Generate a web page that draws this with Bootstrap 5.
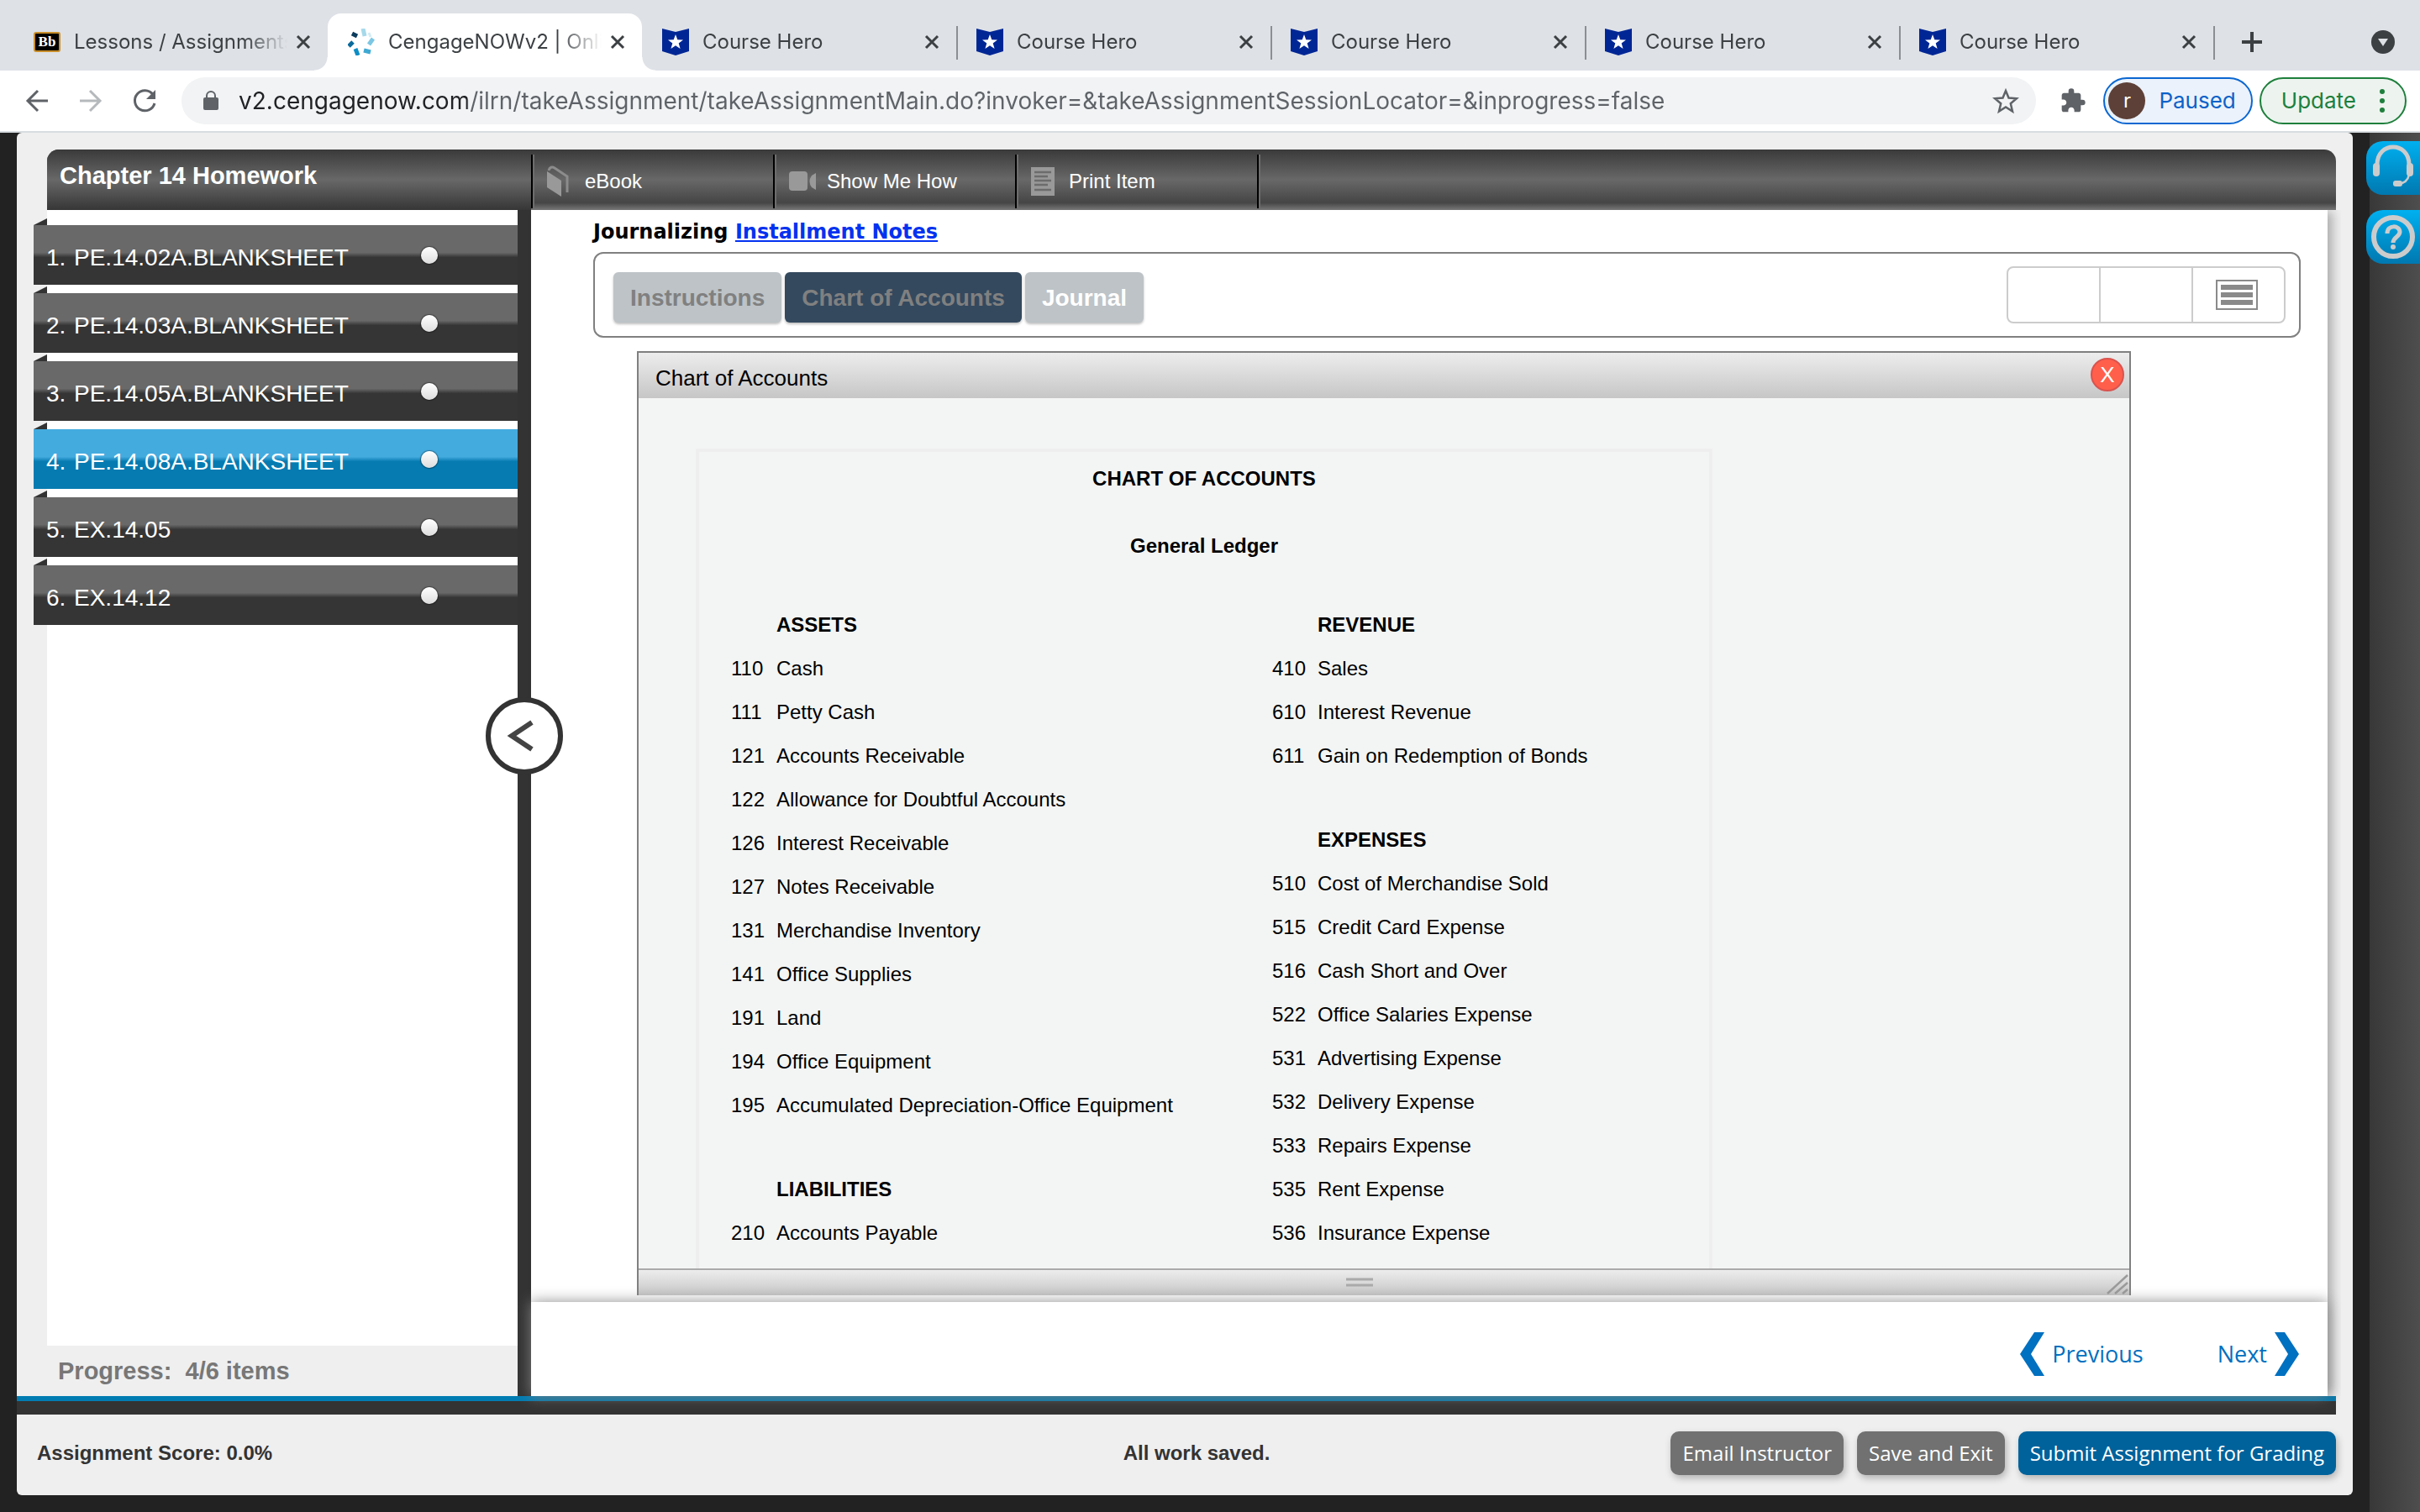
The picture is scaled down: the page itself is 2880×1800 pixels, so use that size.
<!DOCTYPE html>
<html lang="en">
<head>
<meta charset="utf-8">
<meta name="viewport" content="width=device-width, initial-scale=1">
<title>CengageNOWv2 | Online teaching and learning</title>
<link href="https://cdn.jsdelivr.net/npm/bootstrap@5.3.0/dist/css/bootstrap.min.css" rel="stylesheet">
<style>
body{font-family:"Liberation Sans",Arial,sans-serif;font-size:24px;line-height:32px;color:#000;background:#222}
svg{display:block;flex:none}
button{font-family:inherit}
/* browser chrome */
.tabstrip{height:84px;background:#dee1e6;padding:16px 30px 0 16px;font-family:Inter,sans-serif;color:#3c4043}
.tabitem{flex:0 1 374px;min-width:0;height:68px;padding:0 20px 0 24px;position:relative}
.tabname{flex:1 1 0;min-width:0;margin-right:-6px;white-space:nowrap;overflow:hidden;-webkit-mask-image:linear-gradient(90deg,#000 80%,transparent);mask-image:linear-gradient(90deg,#000 80%,transparent)}
.tabitem.divided::after{content:"";position:absolute;right:-2px;top:15px;width:2px;height:40px;background:#8b8e93}
.tabitem.current{background:#fff;border-radius:16px 16px 0 0}
.tabitem.current::before,.tabitem.current::after{content:"";position:absolute;bottom:0;width:16px;height:16px}
.tabitem.current::before{left:-16px;background:radial-gradient(circle at 0 0,transparent 15px,#fff 16px)}
.tabitem.current::after{right:-16px;background:radial-gradient(circle at 100% 0,transparent 15px,#fff 16px)}
.tabtail{padding-left:34px}
.plain{border:0;background:none;padding:0;color:inherit}
.bbmark{width:32px;height:24px;border:2px solid #c98f2b;border-radius:3px;background:#000;color:#fff;font:bold 17px/20px "Liberation Serif",serif;text-align:center}
.toolbar{height:74px;background:#fff;border-bottom:2px solid #d8dde1;padding:0 16px 0 28px;color:#5f6368;font-family:Inter,sans-serif}
.arrows{gap:32px;margin-right:28px}
.omnibox{height:56px;border-radius:28px;background:#f1f3f4;padding:0 20px 0 26px}
.omnibox input{border:0;outline:0;font:28px/40px Inter,sans-serif;color:transparent;background:linear-gradient(90deg,#202124 280px,#5f6368 280px);-webkit-background-clip:text;background-clip:text}
.pill{height:56px;border-radius:28px;border:2px solid #0b67d1;background:#ebf2fb;color:#0b62c9;font-size:26px;padding:0 18px 0 4px;gap:16px}
.pill.upd{border-color:#1e7f3c;background:#edf4ef;color:#1e7f3c;padding:0 24px;gap:28px}
.face{width:44px;height:44px;border-radius:50%;background:#5d4037;color:#fff;font-size:24px}
/* page */
.edge{width:60px;background:linear-gradient(90deg,#383838,#4e4e4e);padding-top:10px;gap:18px}
.side-help{width:64px;height:64px;border:0;border-radius:20px 0 0 20px;background:linear-gradient(#00b0f0,#0078b0);margin-left:-4px;padding:0}
.app{background:#efefef;border-radius:6px;margin:0 20px 20px}
.fit{min-width:0;min-height:0}
.topbar{height:72px;margin:20px 20px 0 36px;border-radius:14px 14px 0 0;color:#fff;background:linear-gradient(#3a3a3a,#686868 50%,#454545 88%,#777);overflow:hidden}
.course{width:576px;padding:0 15px;background:linear-gradient(#3a3a3a,#686868 50%,#363636);font-size:29px;font-weight:bold;line-height:62px;margin:0}
.topbar .tool{width:288px;height:64px;margin-top:6px;padding:0 0 0 17px;border-left:2px solid #000;box-shadow:inset 2px 0 0 #6d6d6d}
.topbar .tool-end{width:4px;height:64px;margin-top:6px;background:#000;border-right:2px solid #6d6d6d}
.topbar svg{width:32px;margin-right:13px}
.leftnav{width:596px;padding-left:36px}
.navsheet{background:#fff;padding-top:18px}
.navitem{height:71px;margin:0 0 10px -16px;padding:0 95px 0 15px;color:#fff;font-size:28px;text-decoration:none;position:relative;background:linear-gradient(#696969 46%,#353535 54%)}
.navitem::before{content:"";position:absolute;left:0;top:-8px;border-left:16px solid transparent;border-bottom:8px solid #333}
.navitem .txt{padding-top:6px;flex:1}
.navitem .num{width:33px;display:inline-block}
.navitem.on{background:linear-gradient(#44abdf 46%,#067bb1 54%)}
.dot{width:20px;height:20px;border-radius:50%;background:linear-gradient(#fff,#ddd);box-shadow:0 0 1px 1px rgba(0,0,0,.35)}
.progress-line{height:60px;margin:0;padding-left:13px;font-size:29px;line-height:60px;font-weight:bold;color:#777}
.divider{width:16px;background:#333;position:relative}
.collapse-btn{position:absolute;left:-38px;top:580px;width:92px;height:92px;border-radius:50%;border:6px solid #333;background:#fff;z-index:5;padding:0}
.stage{background:#fff;margin-right:30px;box-shadow:8px 0 12px -2px rgba(0,0,0,.28);position:relative;clip-path:inset(0 -16px -22px -16px)}
.content{padding:10px 32px 0 74px;overflow:hidden}
.content h1{font:bold 24px/32px "DejaVu Sans",Verdana,sans-serif;margin:0 0 8px}
.content h1 a{color:#0432f0}
.toolbox{height:102px;border:2px solid #808080;border-radius:12px;padding:0 16px 0 22px}
.seg{height:60px;border:0;border-radius:6px;background:#bdc3c7;color:#808080;font-size:28px;font-weight:bold;padding:2px 20px 0;box-shadow:0 2px 3px rgba(0,0,0,.25);white-space:nowrap}
.seg.on{background:#34495e}
.seg.live{color:#fff}
.segs{padding-top:6px}
.trio{width:332px;height:68px;border:2px solid #ccc;border-radius:8px}
.trio button{flex:1 1 0;border:0;background:none;padding:0 4px 0 0}
.trio button + button{border-left:2px solid #ccc}
.win{margin:16px 202px 0 52px;border:2px solid #808080;border-bottom:0;background:#f3f5f4}
.win-head{height:54px;background:linear-gradient(#ededed,#c6c6c6);padding:6px 6px 0 20px;font-size:26px;line-height:48px}
.xbtn{width:40px;height:40px;border-radius:50%;border:2px solid #d9534f;background:#ff5f4b;color:#fff;font-size:26px;line-height:36px;padding:0}
.win-body{overflow:hidden;padding:60px 0 0 68px}
.sheet{width:1210px;border:4px solid #eee;padding:16px 0 0 38px;font-size:24px;height:1100px}
.sheet h2,.sheet h3{font-size:24px;line-height:32px;font-weight:bold;margin:0 38px 48px 0;text-align:center}
.sheet h3{margin-bottom:52px}
.cols{display:grid;grid-template-columns:644px 1fr;align-items:start}
.cols td,.cols th{height:52px;padding:0;white-space:nowrap}
.cols td:first-child{width:54px}
.cols tbody + tbody::before{content:"";display:block;height:48px}
.win-foot{height:32px;border-top:2px solid #aaa;background:linear-gradient(#ededed,#c6c6c6);padding-right:58px}
.win-foot .grip{position:absolute;right:0;bottom:0}
.pager{height:112px;margin-top:8px;background:#fff;padding:12px 34px 0 0;box-shadow:0 0 16px rgba(136,136,136,.95);position:relative;z-index:2;gap:88px}
.pager a{color:#0070c0;text-decoration:none;font:27px/40px "Open Sans",sans-serif}
.rule-blue{height:6px;background:#007cb2;margin-right:20px}
.rule-dark{height:16px;background:#333;margin-right:20px}
.foot{height:96px;padding:0 20px 4px 24px;color:#333;display:grid;grid-template-columns:1fr auto 1fr;align-items:center;font-weight:bold}
.act{height:52px;border:0;border-radius:10px;background:#717171;color:#fff;font:24px/32px "Open Sans",sans-serif;padding:0 14px;box-shadow:2px 4px 8px rgba(0,0,0,.25);white-space:nowrap}
.act.go{background:#00629b}
</style>
</head>
<body>
<svg width="0" height="0" class="position-absolute" aria-hidden="true">
  <symbol id="x" viewBox="0 0 18 18"><path d="M2 2l14 14M16 2L2 16" stroke="#3c4043" stroke-width="3" fill="none"/></symbol>
  <symbol id="hero" viewBox="0 0 32 32"><path d="M0 0l16 4L32 0v27l-16 5L0 27z" fill="#002695"/><path d="M16 7l2.300 6.300 6.700.200-5.300 4.100 1.900 6.400L16 20.200 10.400 24l1.900-6.400L7 13.500l6.700-.200z" fill="#fff"/></symbol>
</svg>
<div class="vh-100 d-flex flex-column overflow-hidden">
  <header class="flex-shrink-0">
    <nav class="tabstrip d-flex" aria-label="Tabs">
      <div class="tabitem d-flex align-items-center gap-3"><span class="bbmark">Bb</span><span class="tabname">Lessons / Assignments</span><button class="plain" aria-label="Close tab"><svg width="18" height="18"><use href="#x"/></svg></button></div>
      <div class="tabitem current d-flex align-items-center gap-3">
        <svg width="32" height="32" viewBox="0 0 32 32" fill="none" stroke-width="5"><path d="M18 0l2 9" stroke="#a6d9ea"/><path d="M30 12l-5 7" stroke="#7cc7e3"/><path d="M27 28l-8-2" stroke="#3fa9d3"/><path d="M12 32l-3-8" stroke="#0c8dc5"/><path d="M1 21l5-5" stroke="#0a6a9c"/><path d="M5 6l6 3" stroke="#0b3b5d"/><path d="M25 5l2 5" stroke="#d2ecf5" stroke-width="3"/></svg>
        <span class="tabname">CengageNOWv2 | Online</span><button class="plain" aria-label="Close tab"><svg width="18" height="18"><use href="#x"/></svg></button></div>
      <div class="tabitem divided d-flex align-items-center gap-3"><svg width="32" height="32"><use href="#hero"/></svg><span class="tabname">Course Hero</span><button class="plain" aria-label="Close tab"><svg width="18" height="18"><use href="#x"/></svg></button></div>
      <div class="tabitem divided d-flex align-items-center gap-3"><svg width="32" height="32"><use href="#hero"/></svg><span class="tabname">Course Hero</span><button class="plain" aria-label="Close tab"><svg width="18" height="18"><use href="#x"/></svg></button></div>
      <div class="tabitem divided d-flex align-items-center gap-3"><svg width="32" height="32"><use href="#hero"/></svg><span class="tabname">Course Hero</span><button class="plain" aria-label="Close tab"><svg width="18" height="18"><use href="#x"/></svg></button></div>
      <div class="tabitem divided d-flex align-items-center gap-3"><svg width="32" height="32"><use href="#hero"/></svg><span class="tabname">Course Hero</span><button class="plain" aria-label="Close tab"><svg width="18" height="18"><use href="#x"/></svg></button></div>
      <div class="tabitem divided d-flex align-items-center gap-3"><svg width="32" height="32"><use href="#hero"/></svg><span class="tabname">Course Hero</span><button class="plain" aria-label="Close tab"><svg width="18" height="18"><use href="#x"/></svg></button></div>
      <div class="tabtail d-flex flex-grow-1 align-items-center justify-content-between">
        <button class="plain" aria-label="New tab"><svg width="24" height="24" viewBox="0 0 24 24"><path d="M12 0v24M0 12h24" stroke="#3c4043" stroke-width="4"/></svg></button>
        <button class="plain" aria-label="Search tabs"><svg width="28" height="28" viewBox="0 0 28 28"><circle cx="14" cy="14" r="14" fill="#3c4043"/><path d="M8 10h12l-6 9z" fill="#dee1e6"/></svg></button>
      </div>
    </nav>
    <div class="toolbar d-flex align-items-center">
      <div class="arrows d-flex align-items-center">
        <button class="plain" aria-label="Back"><svg width="32" height="32" viewBox="0 0 32 32" fill="none" stroke="#5f6368" stroke-width="3"><path d="M29 16H5M17 4L5 16l12 12"/></svg></button>
        <button class="plain" aria-label="Forward"><svg width="32" height="32" viewBox="0 0 32 32" fill="none" stroke="#b6b9bc" stroke-width="3"><path d="M3 16h24M15 4l12 12-12 12"/></svg></button>
        <button class="plain" aria-label="Reload"><svg width="32" height="32" viewBox="0 0 32 32" fill="none" stroke="#5f6368" stroke-width="3"><path d="M26 8.500A12 12 0 1 0 28 19"/><path d="M29 3v11H18z" fill="#5f6368" stroke="none"/></svg></button>
      </div>
      <div class="omnibox d-flex align-items-center flex-grow-1">
        <svg width="18" height="24" viewBox="0 0 18 24"><path d="M4 10V6a5 5 0 0 1 10 0v4" fill="none" stroke="#5f6368" stroke-width="2"/><rect y="8" width="18" height="15" rx="2" fill="#5f6368"/></svg>
        <input class="flex-grow-1 ms-3 p-0 ps-2" type="text" aria-label="Address" value="v2.cengagenow.com/ilrn/takeAssignment/takeAssignmentMain.do?invoker=&amp;takeAssignmentSessionLocator=&amp;inprogress=false">
        <button class="plain" aria-label="Bookmark"><svg width="32" height="32" viewBox="0 0 32 32"><path d="M16 4l3.500 8.500 9.500.700-7.200 6 2.200 9.300-8-5-8 5 2.200-9.300-7.200-6 9.500-.700z" fill="none" stroke="#5f6368" stroke-width="2.500"/></svg></button>
      </div>
      <button class="plain ms-4 ps-1 me-3 pe-1" aria-label="Extensions"><svg width="32" height="32" viewBox="0 0 24 24"><path d="M20.500 11H19V7c0-1.100-.900-2-2-2h-4V3.500a2.500 2.500 0 0 0-5 0V5H4c-1.100 0-2 .900-2 2v3.800h1.500c1.500 0 2.700 1.200 2.700 2.700S5 16.200 3.500 16.200H2V20c0 1.100.900 2 2 2h3.800v-1.500c0-1.500 1.200-2.700 2.700-2.700s2.700 1.200 2.700 2.700V22H17c1.100 0 2-.900 2-2v-4h1.500a2.500 2.500 0 0 0 0-5z" fill="#5f6368"/></svg></button>
      <button class="pill d-flex align-items-center"><span class="face d-flex align-items-center justify-content-center">r</span><span>Paused</span></button>
      <button class="pill upd d-flex align-items-center ms-2"><span>Update</span><svg width="6" height="30" viewBox="0 0 6 30" fill="#1e7f3c"><circle cx="3" cy="4" r="3"/><circle cx="3" cy="15" r="3"/><circle cx="3" cy="26" r="3"/></svg></button>
    </div>
  </header>

  <div class="d-flex flex-grow-1 fit">
    <div class="d-flex flex-column flex-grow-1 fit">
      <div class="app d-flex flex-column flex-grow-1 fit">
        <div class="topbar d-flex flex-shrink-0">
          <h2 class="course">Chapter 14 Homework</h2>
          <button class="plain tool d-flex align-items-center"><svg height="40" viewBox="0 0 32 40"><path d="M0 8l17 11v19L0 27z" fill="#999"/><path d="M2 7c1-4 4-5 7-3l15 10v19" fill="none" stroke="#8c8c8c" stroke-width="3"/></svg>eBook</button>
          <button class="plain tool d-flex align-items-center"><svg height="24" viewBox="0 0 32 24" fill="#999"><rect width="22" height="23" rx="4"/><path d="M32 2v20l-5-3q-5-7 0-14z"/></svg>Show Me How</button>
          <button class="plain tool d-flex align-items-center"><svg height="34" viewBox="0 0 32 34"><path d="M0 0h28v34H0z" fill="#999"/><path d="M4 6h20M4 11h16M4 16h20M4 21h16M4 27h20" stroke="#6c6c6c" stroke-width="2.500"/></svg>Print Item</button>
          <div class="tool-end"></div>
        </div>
        <div class="d-flex flex-grow-1 fit">
          <aside class="leftnav d-flex flex-column flex-shrink-0">
            <nav class="navsheet flex-grow-1">
              <a href="#" class="navitem d-flex align-items-center"><span class="txt"><span class="num">1.</span>PE.14.02A.BLANKSHEET</span><span class="dot"></span></a>
              <a href="#" class="navitem d-flex align-items-center"><span class="txt"><span class="num">2.</span>PE.14.03A.BLANKSHEET</span><span class="dot"></span></a>
              <a href="#" class="navitem d-flex align-items-center"><span class="txt"><span class="num">3.</span>PE.14.05A.BLANKSHEET</span><span class="dot"></span></a>
              <a href="#" class="navitem on d-flex align-items-center"><span class="txt"><span class="num">4.</span>PE.14.08A.BLANKSHEET</span><span class="dot"></span></a>
              <a href="#" class="navitem d-flex align-items-center"><span class="txt"><span class="num">5.</span>EX.14.05</span><span class="dot"></span></a>
              <a href="#" class="navitem d-flex align-items-center"><span class="txt"><span class="num">6.</span>EX.14.12</span><span class="dot"></span></a>
            </nav>
            <p class="progress-line">Progress:&nbsp; 4/6 items</p>
          </aside>
          <div class="divider flex-shrink-0"><button class="collapse-btn" aria-label="Collapse list"><svg width="80" height="80" viewBox="0 0 80 80"><path d="M49 24L25 40l24 16" fill="none" stroke="#444" stroke-width="6"/></svg></button></div>
          <main class="stage d-flex flex-column flex-grow-1 fit">
            <div class="content d-flex flex-column flex-grow-1 fit">
              <h1 class="flex-shrink-0">Journalizing <a href="#">Installment Notes</a></h1>
              <div class="toolbox d-flex align-items-center justify-content-between flex-shrink-0">
                <div class="segs d-flex gap-1">
                  <button class="seg">Instructions</button><button class="seg on">Chart of Accounts</button><button class="seg live">Journal</button>
                </div>
                <div class="trio d-flex">
                  <button aria-label="Tool one"></button><button aria-label="Tool two"></button>
                  <button class="d-flex align-items-center justify-content-center" aria-label="List view"><svg width="50" height="36" viewBox="0 0 50 36"><path d="M1 1h48v34H1z" fill="#fff" stroke="#8a8a8a" stroke-width="2"/><path d="M6 9h38M6 18h38M6 27h38" stroke="#8a8a8a" stroke-width="6"/></svg></button>
                </div>
              </div>
              <section class="win d-flex flex-column flex-grow-1 fit">
                <div class="win-head d-flex justify-content-between align-items-start flex-shrink-0"><span>Chart of Accounts</span><button class="xbtn" aria-label="Close">X</button></div>
                <div class="win-body flex-grow-1 fit">
                  <div class="sheet">
                    <h2>CHART OF ACCOUNTS</h2>
                    <h3>General Ledger</h3>
                    <div class="cols">
                      <table>
                        <tbody>
                          <tr><td></td><th>ASSETS</th></tr>
                          <tr><td>110</td><td>Cash</td></tr>
                          <tr><td>111</td><td>Petty Cash</td></tr>
                          <tr><td>121</td><td>Accounts Receivable</td></tr>
                          <tr><td>122</td><td>Allowance for Doubtful Accounts</td></tr>
                          <tr><td>126</td><td>Interest Receivable</td></tr>
                          <tr><td>127</td><td>Notes Receivable</td></tr>
                          <tr><td>131</td><td>Merchandise Inventory</td></tr>
                          <tr><td>141</td><td>Office Supplies</td></tr>
                          <tr><td>191</td><td>Land</td></tr>
                          <tr><td>194</td><td>Office Equipment</td></tr>
                          <tr><td>195</td><td>Accumulated Depreciation-Office Equipment</td></tr>
                        </tbody>
                        <tbody>
                          <tr><td></td><th>LIABILITIES</th></tr>
                          <tr><td>210</td><td>Accounts Payable</td></tr>
                        </tbody>
                      </table>
                      <table>
                        <tbody>
                          <tr><td></td><th>REVENUE</th></tr>
                          <tr><td>410</td><td>Sales</td></tr>
                          <tr><td>610</td><td>Interest Revenue</td></tr>
                          <tr><td>611</td><td>Gain on Redemption of Bonds</td></tr>
                        </tbody>
                        <tbody>
                          <tr><td></td><th>EXPENSES</th></tr>
                          <tr><td>510</td><td>Cost of Merchandise Sold</td></tr>
                          <tr><td>515</td><td>Credit Card Expense</td></tr>
                          <tr><td>516</td><td>Cash Short and Over</td></tr>
                          <tr><td>522</td><td>Office Salaries Expense</td></tr>
                          <tr><td>531</td><td>Advertising Expense</td></tr>
                          <tr><td>532</td><td>Delivery Expense</td></tr>
                          <tr><td>533</td><td>Repairs Expense</td></tr>
                          <tr><td>535</td><td>Rent Expense</td></tr>
                          <tr><td>536</td><td>Insurance Expense</td></tr>
                        </tbody>
                      </table>
                    </div>
                  </div>
                </div>
                <div class="win-foot position-relative d-flex align-items-center justify-content-center flex-shrink-0">
                  <svg width="32" height="12" viewBox="0 0 32 12"><path d="M0 2h32M0 9h32" stroke="#aaa" stroke-width="3"/></svg>
                  <svg class="grip" width="28" height="28" viewBox="0 0 28 28"><path d="M2 26L26 4M11 26l15-13M20 26l6-5" stroke="#9a9a9a" stroke-width="2.500"/></svg>
                </div>
              </section>
            </div>
            <nav class="pager d-flex align-items-center justify-content-end flex-shrink-0">
              <a href="#" class="d-flex align-items-center gap-2"><svg width="30" height="52" viewBox="0 0 30 52"><path d="M17 0h12L13 26l16 26H17L0 26z" fill="#0070c0"/></svg>Previous</a>
              <a href="#" class="d-flex align-items-center gap-2">Next<svg width="30" height="52" viewBox="0 0 30 52"><path d="M13 0H1l16 26L1 52h12l17-26z" fill="#0070c0"/></svg></a>
            </nav>
          </main>
        </div>
        <div class="rule-blue flex-shrink-0"></div>
        <div class="rule-dark flex-shrink-0"></div>
        <footer class="foot flex-shrink-0">
          <span>Assignment Score: 0.0%</span>
          <span class="ps-4">All work saved.</span>
          <div class="d-flex justify-content-end gap-3">
            <button class="act">Email Instructor</button><button class="act">Save and Exit</button><button class="act go">Submit Assignment for Grading</button>
          </div>
        </footer>
      </div>
    </div>
    <aside class="edge d-flex flex-column flex-shrink-0">
      <button class="side-help" aria-label="Support"><svg width="64" height="64" viewBox="0 0 64 64" fill="none" stroke="#ccc"><path d="M13 32V28C13 0 51 0 51 28v4" stroke-width="5"/><path d="M51 40q-2 10-13 11" stroke-width="2.500"/><rect x="8" y="26" width="8" height="16" rx="4" fill="#ccc" stroke="none"/><rect x="48" y="26" width="8" height="16" rx="4" fill="#ccc" stroke="none"/><rect x="32" y="47" width="11" height="7" rx="3" fill="#ccc" stroke="none"/></svg></button>
      <button class="side-help" aria-label="Help"><svg width="64" height="64" viewBox="0 0 64 64" fill="none" stroke="#ccc"><circle cx="32" cy="32" r="23" stroke-width="6"/><path d="M25 28c0-11 15-10 15-2 0 6-8 6-8 13" stroke-width="5"/><circle cx="32" cy="44" r="3" fill="#ccc" stroke="none"/></svg></button>
    </aside>
  </div>
</div>
<script src="https://cdn.jsdelivr.net/npm/bootstrap@5.3.0/dist/js/bootstrap.bundle.min.js"></script>
</body>
</html>
